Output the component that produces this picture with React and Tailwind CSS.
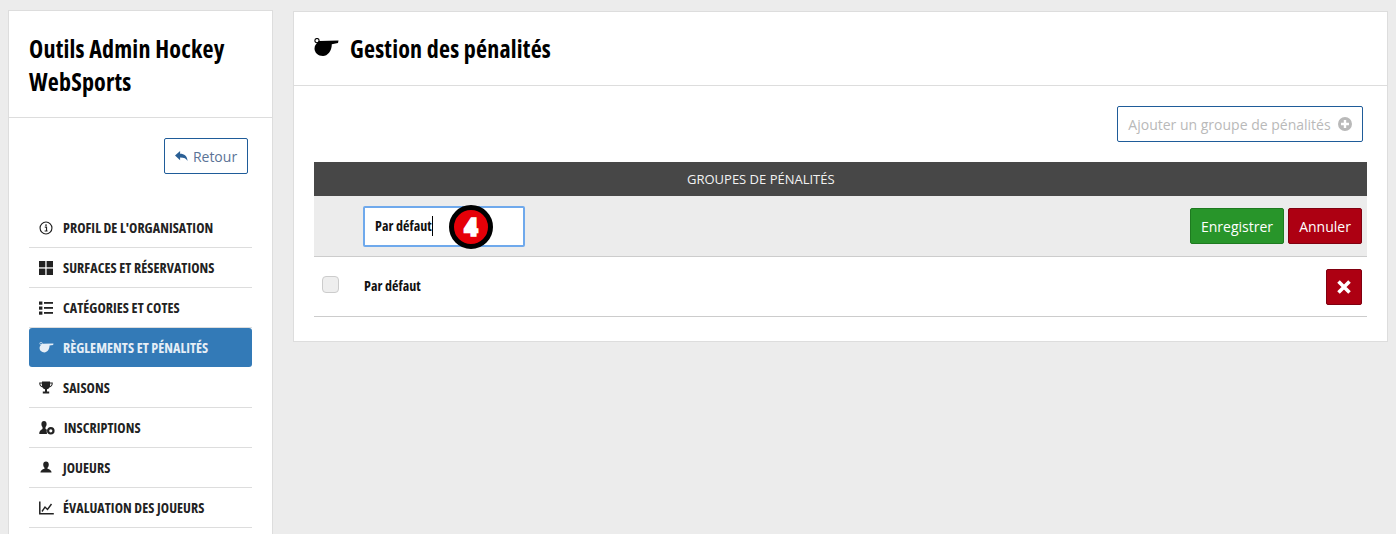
import React from "react";

const cond = "font-['Open_Sans','Noto_Sans',sans-serif] font-bold [font-stretch:75%] tracking-[0.06px]";
const condLarge = "font-['Open_Sans','Noto_Sans',sans-serif] font-bold [font-stretch:75%] tracking-[0.2px]";

function Whistle({ className }) {
  return (
    <svg viewBox="0 0 25 19" className={className} fill="currentColor">
      <circle cx="3" cy="2.600" r="2.100" fill="none" stroke="currentColor" strokeWidth="1.100" />
      <path d="M5 3 L24.500 2.400 L24 5 L17.800 6.200 C17.800 13 13.500 18 9 18 C4 18 .5 14.500 .5 10.500 C.5 7.500 2.500 5.200 5 3 Z" />
    </svg>
  );
}

const icons = {
  info: (
    <svg viewBox="0 0 16 16" className="w-[14px] h-[14px]" fill="none" stroke="currentColor">
      <circle cx="8" cy="8" r="6.800" strokeWidth="1.300" />
      <path d="M6.600 7h2v4.200M6.400 11.400h3.400" strokeWidth="1.300" />
      <circle cx="8" cy="4.600" r="1" fill="currentColor" stroke="none" />
    </svg>
  ),
  grid: (
    <svg viewBox="0 0 14 14" className="w-[14px] h-[14px]" fill="currentColor">
      <rect x="0" y="0" width="6.300" height="6.300" /><rect x="7.600" y="0" width="6.400" height="6.300" />
      <rect x="0" y="7.600" width="6.300" height="6.400" /><rect x="7.600" y="7.600" width="6.400" height="6.400" />
    </svg>
  ),
  list: (
    <svg viewBox="0 0 14 14" className="w-[14px] h-[14px]" fill="currentColor">
      <rect x="0" y=".5" width="3.400" height="3.200" /><rect x="5" y="1" width="9" height="1.800" />
      <rect x="0" y="5.500" width="3.400" height="3.200" /><rect x="5" y="6" width="9" height="1.800" />
      <rect x="0" y="10.500" width="3.400" height="3.200" /><rect x="5" y="11" width="9" height="1.800" />
    </svg>
  ),
  whistle: <Whistle className="w-[15px] h-[11px]" />,
  trophy: (
    <svg viewBox="0 0 14 13" className="w-[14px] h-[13px]" fill="currentColor">
      <path d="M3 .5h8v1h2.800c0 2.800-1 4.400-3.400 4.900C9.800 7.400 9 7.900 8 8.200V10.500h2.200v2H3.800v-2H6V8.200c-1-.3-1.800-.8-2.400-1.800C1.200 5.900.2 4.300.2 1.500H3zM1.300 2.600c.1 1.300.6 2.200 1.800 2.700-.2-.8-.2-1.800-.2-2.700zm11.400 0h-1.600c0 .9 0 1.900-.2 2.700 1.200-.5 1.700-1.400 1.800-2.700z" />
    </svg>
  ),
  userplus: (
    <svg viewBox="0 0 16 14" className="w-[16px] h-[14px]" fill="currentColor">
      <path d="M5 0c1.600 0 2.600 1.200 2.600 2.900 0 1.300-.4 2.500-1.100 3.200V8c.5.200 1 .4 1.400.7-.3.900-.3 2 0 3v1.300H.3c-.2-2 .6-4 3.200-5V6.100C2.800 5.400 2.400 4.200 2.400 2.900 2.400 1.200 3.400 0 5 0z" />
      <circle cx="11.800" cy="9.800" r="2.700" fill="none" stroke="currentColor" strokeWidth="2.200" />
    </svg>
  ),
  user: (
    <svg viewBox="0 0 14 14" className="w-[14px] h-[13px]" fill="currentColor">
      <path d="M7 .5c1.900 0 3 1.300 3 3.200 0 1.500-.6 2.800-1.400 3.500v1.200c2.600.7 4.400 1.900 4.400 4.100H1c0-2.200 1.800-3.400 4.400-4.100V7.200C4.600 6.500 4 5.200 4 3.700 4 1.800 5.100.5 7 .5z" />
    </svg>
  ),
  chart: (
    <svg viewBox="0 0 15 14" className="w-[15px] h-[14px]" fill="none" stroke="currentColor">
      <path d="M.8.5v12.300h14" strokeWidth="1.500" />
      <path d="M3 10.500l3-4.500 2.500 2.500 4-5.500" strokeWidth="1.400" />
    </svg>
  ),
};

const items = [
  ["info", "PROFIL DE L'ORGANISATION"],
  ["grid", "SURFACES ET RÉSERVATIONS"],
  ["list", "CATÉGORIES ET COTES"],
  ["whistle", "RÈGLEMENTS ET PÉNALITÉS", true],
  ["trophy", "SAISONS"],
  ["userplus", "INSCRIPTIONS"],
  ["user", "JOUEURS"],
  ["chart", "ÉVALUATION DES JOUEURS"],
];

function NavItem({ icon, label, active }) {
  return (
    <a
      className={`flex items-center pl-[10px] text-[14px] ${cond} ${
        active ? "bg-[#337ab7] text-[#e6eef6] rounded-[3px] h-[39px] mb-px" : "h-10 text-[#222] border-b border-[#ddd]"
      }`}
    >
      <span className="w-[24px] flex justify-start items-center shrink-0">{icons[icon]}</span>
      <span className={icon === "userplus" ? "ml-px" : ""}>{label}</span>
    </a>
  );
}

export default function App() {
  return (
    <div className="h-[534px] overflow-hidden bg-[#ececec] flex items-start pl-2 pt-[10px] pr-2 gap-5 font-['Open_Sans',sans-serif]">
      <aside className="w-[265px] shrink-0 bg-white border border-[#ddd] h-[600px]">
        <div className={`h-[107px] border-b border-[#ddd] px-5 pt-[21px] text-[24px] leading-[33px] text-black ${condLarge}`}>
          Outils Admin Hockey<br />WebSports
        </div>
        <div className="flex justify-end pr-6 pt-5">
          <button className="h-9 w-[84px] border border-[#1f5c99] rounded-[2px] flex items-center justify-center gap-[5px] text-[14px] text-[#5b7396]">
            <svg viewBox="0 0 14 12" className="w-[13px] h-[12px] text-[#2a5f95]" fill="currentColor">
              <path d="M5.500.5v3c4.500 0 7.800 2 8 8-1.300-3-3.600-4-8-4v3L0 5.500z" />
            </svg>
            Retour
          </button>
        </div>
        <nav className="mt-[34px] mx-5">
          {items.map(([icon, label, active]) => (
            <NavItem key={label} icon={icon} label={label} active={active} />
          ))}
        </nav>
      </aside>

      <main className="flex-1 bg-white border border-[#ddd] mt-px h-[331px]">
        <div className={`h-[74px] border-b border-[#ddd] flex items-center pl-5 text-[24px] text-black ${condLarge}`}>
          <Whistle className="w-[25px] h-[19px] mr-[11px] -mt-[3px]" />
          Gestion des pénalités
        </div>
        <div className="px-5 pt-5">
          <div className="flex justify-end pr-1">
            <button className="h-9 w-[246px] border border-[#1f5c99] rounded-[2px] flex items-center justify-center gap-[7px] text-[14px] text-[#b9b9b9]">
              Ajouter un groupe de pénalités
              <svg viewBox="0 0 14 14" className="w-[14px] h-[14px]" fill="currentColor">
                <path fillRule="evenodd" d="M7 0a7 7 0 1 1 0 14A7 7 0 0 1 7 0zM5.800 3v2.800H3v2.400h2.800V11h2.400V8.200H11V5.800H8.200V3z" />
              </svg>
            </button>
          </div>
          <div className="mt-5 w-[1053px]">
            <div className="h-[34px] bg-[#474747] text-[#f2f2f2] text-[13px] flex items-center pl-[373px] pt-[2px]">
              GROUPES DE PÉNALITÉS
            </div>
            <div className="h-[61px] bg-[#ececec] border-b border-[#ccc] flex items-center pl-[49px] pr-[5px]">
              <div className="relative w-[162px] h-[41px] bg-white border-2 border-[#6fa9ec] rounded-[2px] flex items-center pl-[10px]">
                <span className={`text-[14px] text-[#111] ${cond} border-r border-black leading-[20px]`}>Par défaut</span>
                <span className="absolute left-[84px] top-[-3px] w-[44px] h-[44px] rounded-full bg-[#e60008] border-[5px] border-black flex items-center justify-center text-white text-[24px] font-['Open_Sans',sans-serif] font-extrabold leading-none [-webkit-text-stroke:1.5px_white]">
                  4
                </span>
              </div>
              <div className="ml-auto flex gap-1">
                <button className="h-9 w-[94px] bg-[#28952a] border border-[#1e7a20] rounded-[2px] text-white text-[14px]">Enregistrer</button>
                <button className="h-9 w-[74px] bg-[#ad0012] border border-[#800010] rounded-[2px] text-white text-[14px]">Annuler</button>
              </div>
            </div>
            <div className="h-[60px] border-b border-[#ccc] flex items-center pr-[5px]">
              <span className="ml-2 w-[17px] h-[17px] rounded-[4px] bg-[#eee] border border-[#ccc] -mt-[5px]"></span>
              <span className={`ml-[25px] -mt-[2px] text-[14px] text-[#111] ${cond}`}>Par défaut</span>
              <button className="ml-auto w-9 h-9 bg-[#ad0012] border border-[#800010] rounded-[2px] flex items-center justify-center">
                <svg viewBox="0 0 14 14" className="w-[14px] h-[14px]" fill="none" stroke="white" strokeWidth="3.600">
                  <path d="M1.500 1.500l11 11M12.500 1.500l-11 11" />
                </svg>
              </button>
            </div>
          </div>
        </div>
      </main>
    </div>
  );
}
